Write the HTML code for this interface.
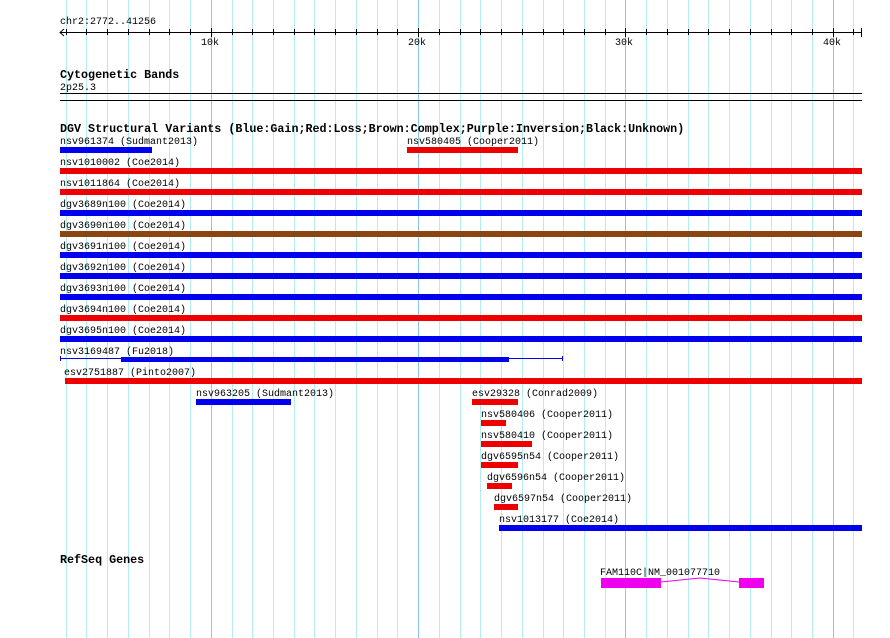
<!DOCTYPE html>
<html><head><style>
html,body{margin:0;padding:0;background:#fff;}
svg{display:block;}
text{font-family:"Liberation Mono","DejaVu Sans Mono",monospace;font-size:10px;fill:#000;}
.b{font-weight:bold;font-size:11.7px;}
</style></head><body>
<svg width="890" height="638" viewBox="0 0 890 638" xmlns="http://www.w3.org/2000/svg">
<g id="grid" stroke-width="1"></g>
<g id="ticks"></g>
<script>
var g=document.getElementById('grid'),tk=document.getElementById('ticks');
for(var k=3;k<=41;k++){var x=Math.round(61+(k-2.772)*20.73)+0.5;var l=document.createElementNS('http://www.w3.org/2000/svg','line');l.setAttribute('x1',x);l.setAttribute('x2',x);l.setAttribute('y1',0);l.setAttribute('y2',638);l.setAttribute('stroke',k%10==0?'#88c8ec':'#b4ecf0');g.appendChild(l);
var t=document.createElementNS('http://www.w3.org/2000/svg','line');t.setAttribute('x1',x);t.setAttribute('x2',x);t.setAttribute('y1',k%10==0?28:29);t.setAttribute('y2',k%10==0?37:35);t.setAttribute('stroke','#000');tk.appendChild(t);}
</script>
<text x="60" y="24">chr2:2772..41256</text>
<line x1="60" y1="32.5" x2="862" y2="32.5" stroke="#000"/>
<polyline points="64,29 60,32.5 64,36" fill="none" stroke="#000"/>
<line x1="861.5" y1="28" x2="861.5" y2="37" stroke="#000"/>
<text x="201" y="45">10k</text>
<text x="408" y="45">20k</text>
<text x="615" y="45">30k</text>
<text x="823" y="45">40k</text>
<text class="b" x="60" y="78">Cytogenetic Bands</text>
<text x="60" y="90">2p25.3</text>
<rect x="60" y="93" width="802" height="1" fill="#000"/>
<rect x="60" y="100" width="802" height="1" fill="#000"/>
<text class="b" x="60" y="132">DGV Structural Variants (Blue:Gain;Red:Loss;Brown:Complex;Purple:Inversion;Black:Unknown)</text>

<text x="60" y="144">nsv961374 (Sudmant2013)</text><rect x="60" y="147" width="92" height="6" fill="#0000ee"/>
<text x="407" y="144">nsv580405 (Cooper2011)</text><rect x="407" y="147" width="111" height="6" fill="#ee0000"/>
<text x="60" y="165">nsv1010002 (Coe2014)</text><rect x="60" y="168" width="802" height="6" fill="#ee0000"/>
<text x="60" y="186">nsv1011864 (Coe2014)</text><rect x="60" y="189" width="802" height="6" fill="#ee0000"/>
<text x="60" y="207">dgv3689n100 (Coe2014)</text><rect x="60" y="210" width="802" height="6" fill="#0000ee"/>
<text x="60" y="228">dgv3690n100 (Coe2014)</text><rect x="60" y="231" width="802" height="6" fill="#8b4513"/>
<text x="60" y="249">dgv3691n100 (Coe2014)</text><rect x="60" y="252" width="802" height="6" fill="#0000ee"/>
<text x="60" y="270">dgv3692n100 (Coe2014)</text><rect x="60" y="273" width="802" height="6" fill="#0000ee"/>
<text x="60" y="291">dgv3693n100 (Coe2014)</text><rect x="60" y="294" width="802" height="6" fill="#0000ee"/>
<text x="60" y="312">dgv3694n100 (Coe2014)</text><rect x="60" y="315" width="802" height="6" fill="#ee0000"/>
<text x="60" y="333">dgv3695n100 (Coe2014)</text><rect x="60" y="336" width="802" height="6" fill="#0000ee"/>
<text x="60" y="354">nsv3169487 (Fu2018)</text>
<rect x="60" y="358" width="503" height="1" fill="#0000ee"/><rect x="60" y="356" width="1" height="5" fill="#0000ee"/><rect x="562" y="356" width="1" height="5" fill="#0000ee"/>
<rect x="121" y="357" width="388" height="5" fill="#0000ee"/>
<text x="64" y="375">esv2751887 (Pinto2007)</text><rect x="65" y="378" width="797" height="6" fill="#ee0000"/>
<text x="196" y="396">nsv963205 (Sudmant2013)</text><rect x="196" y="399" width="95" height="6" fill="#0000ee"/>
<text x="472" y="396">esv29328 (Conrad2009)</text><rect x="472" y="399" width="46" height="6" fill="#ee0000"/>
<text x="481" y="417">nsv580406 (Cooper2011)</text><rect x="481" y="420" width="25" height="6" fill="#ee0000"/>
<text x="481" y="438">nsv580410 (Cooper2011)</text><rect x="481" y="441" width="51" height="6" fill="#ee0000"/>
<text x="481" y="459">dgv6595n54 (Cooper2011)</text><rect x="481" y="462" width="37" height="6" fill="#ee0000"/>
<text x="487" y="480">dgv6596n54 (Cooper2011)</text><rect x="487" y="483" width="25" height="6" fill="#ee0000"/>
<text x="494" y="501">dgv6597n54 (Cooper2011)</text><rect x="494" y="504" width="24" height="6" fill="#ee0000"/>
<text x="499" y="522">nsv1013177 (Coe2014)</text><rect x="499" y="525" width="363" height="6" fill="#0000ee"/>

<text class="b" x="60" y="563">RefSeq Genes</text>
<text x="600" y="575">FAM110C|NM_001077710</text>
<rect x="601" y="578" width="60" height="10" fill="#ee00ee"/>
<rect x="739" y="578" width="25" height="10" fill="#ee00ee"/>
<polyline points="661,582 700,578 739,582" fill="none" stroke="#ee00ee"/>
</svg>
</body></html>
